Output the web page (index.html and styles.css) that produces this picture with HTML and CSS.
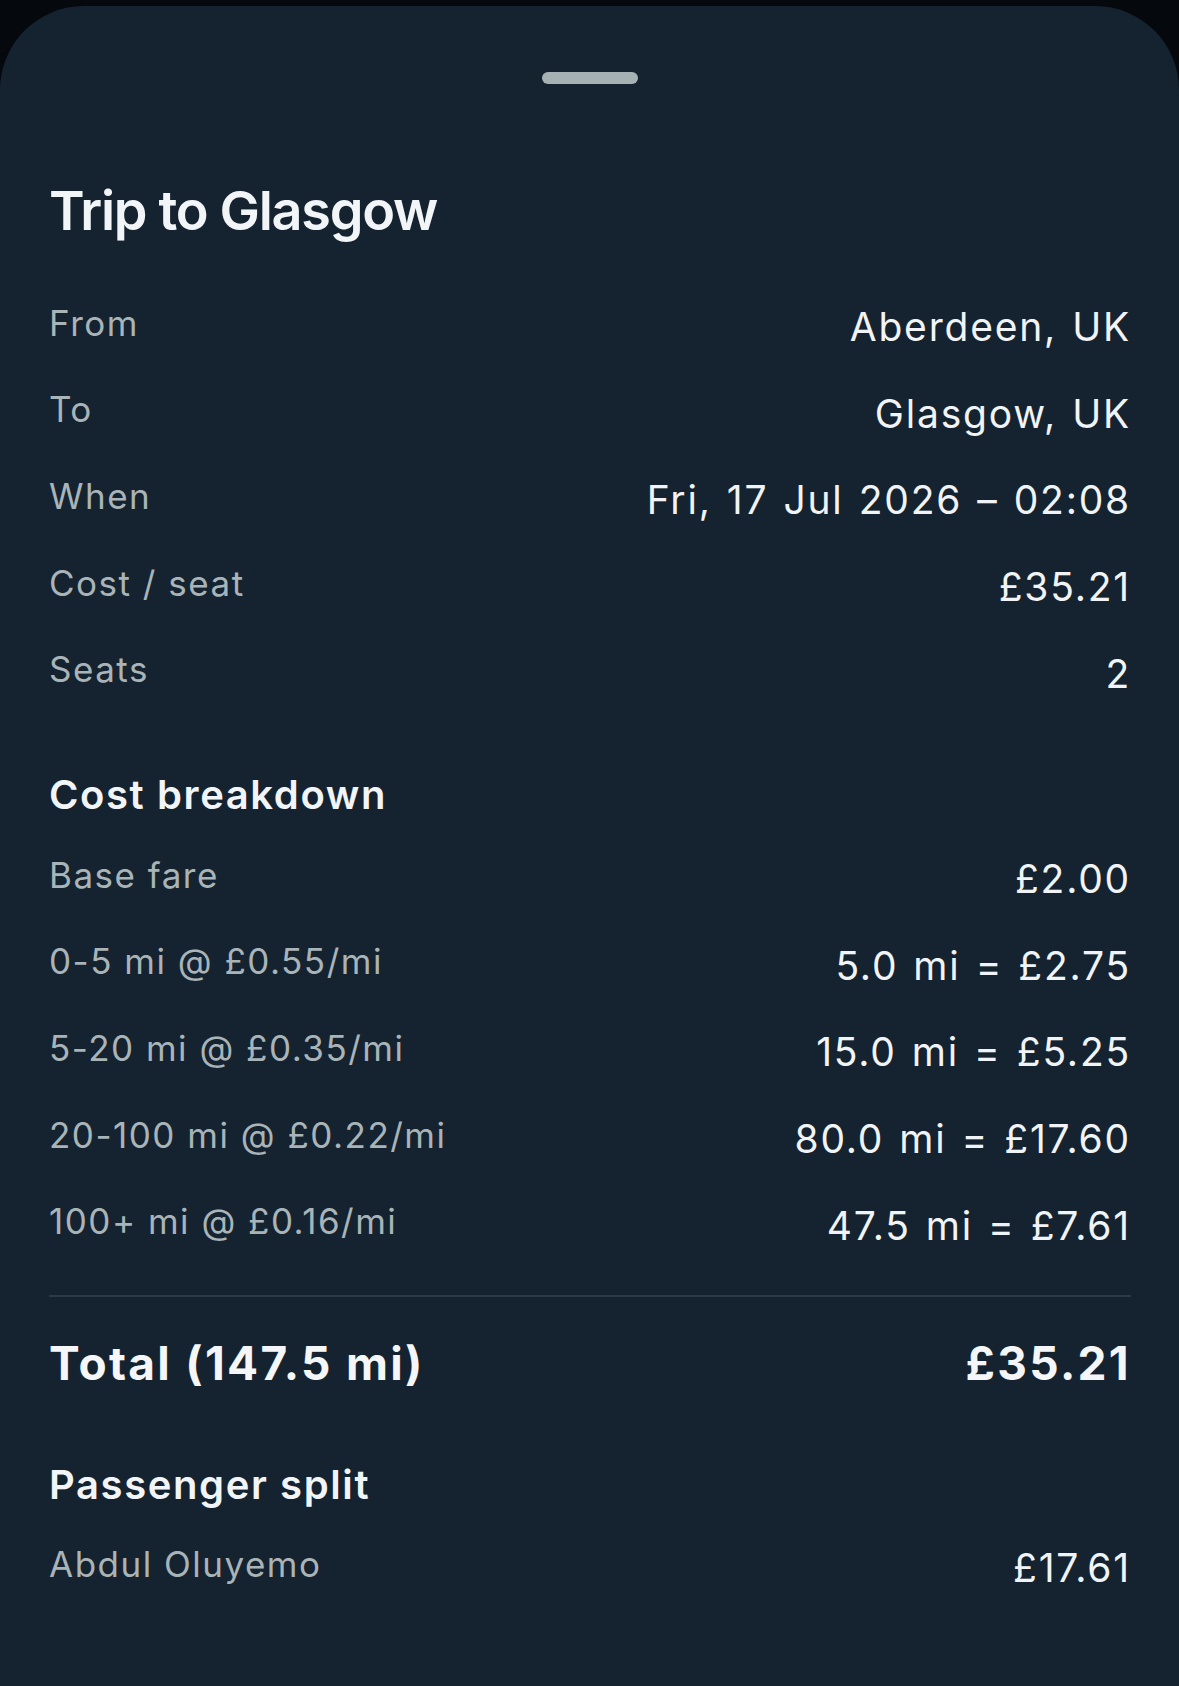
FILE: index.html
```html
<!DOCTYPE html>
<html lang="en">
<head>
    <meta charset="UTF-8">
    <meta name="viewport" content="width=device-width, initial-scale=1.0">
    <title>Trip to Glasgow</title>
    <link rel="stylesheet" href="styles.css">
</head>
<body>

    <div class="sheet">
        <div class="handle"></div>

        <h1 class="title">Trip to Glasgow</h1>

        <div class="rows trip-rows">
            <div class="row"><span class="label">From</span><span class="value">Aberdeen, UK</span></div>
            <div class="row"><span class="label">To</span><span class="value">Glasgow, UK</span></div>
            <div class="row"><span class="label">When</span><span class="value">Fri, 17 Jul 2026 – 02:08</span></div>
            <div class="row"><span class="label">Cost / seat</span><span class="value">£35.21</span></div>
            <div class="row"><span class="label">Seats</span><span class="value">2</span></div>
        </div>

        <h2 class="section-title breakdown-title">Cost breakdown</h2>

        <div class="rows">
            <div class="row"><span class="label">Base fare</span><span class="value">£2.00</span></div>
            <div class="row"><span class="label">0-5 mi @ £0.55/mi</span><span class="value">5.0 mi = £2.75</span></div>
            <div class="row"><span class="label">5-20 mi @ £0.35/mi</span><span class="value">15.0 mi = £5.25</span></div>
            <div class="row"><span class="label">20-100 mi @ £0.22/mi</span><span class="value">80.0 mi = £17.60</span></div>
            <div class="row"><span class="label">100+ mi @ £0.16/mi</span><span class="value">47.5 mi = £7.61</span></div>
        </div>

        <hr class="divider">

        <div class="total">
            <span>Total (147.5 mi)</span>
            <span>£35.21</span>
        </div>

        <h2 class="section-title split-title">Passenger split</h2>

        <div class="rows">
            <div class="row"><span class="label">Abdul Oluyemo</span><span class="value">£17.61</span></div>
        </div>
    </div>

</body>
</html>
```

FILE: styles.css
```css
body {
    margin: 0;
    padding: 0;
    background: #05090d;
    font-family: Inter, "Noto Sans", sans-serif;
    color: #f1f4f6;
}
.sheet {
    margin-top: 6px;
    min-height: 1680px;
    padding: 0 48px 0 49px;
    background-color: #152330;
    border-radius: 84px 84px 0 0;
    box-sizing: border-box;
    overflow: hidden;
}
.handle {
    width: 96px;
    height: 12px;
    margin: 66px auto 0;
    border-radius: 6px;
    background-color: #a6b1b3;
}
.title {
    margin: 95px 0 0;
    font-size: 54px;
    line-height: 64px;
    font-weight: 600;
    letter-spacing: -1.3px;
    color: #f2f5f7;
}
.trip-rows {
    margin-top: 41px;
}
.row {
    display: flex;
    justify-content: space-between;
    align-items: center;
    height: 86.6px;
}
.label {
    margin-bottom: 9px;
    font-size: 35px;
    line-height: 42px;
    letter-spacing: 1.5px;
    color: #a9b4b8;
}
.value {
    font-size: 39px;
    line-height: 48px;
    letter-spacing: 1.8px;
    word-spacing: 2.3px;
    color: #f1f4f6;
}
.section-title {
    margin: 0;
    font-size: 40px;
    line-height: 48px;
    font-weight: 600;
    letter-spacing: 1.6px;
    color: #f2f5f7;
}
.breakdown-title {
    margin: 54px 0 17px;
}
.split-title {
    margin: 70px 0 16px;
}
.divider {
    margin: 26px 0 0;
    height: 2px;
    border: none;
    background-color: #2c3a47;
}
.total {
    display: flex;
    justify-content: space-between;
    margin-top: 38px;
    font-size: 46px;
    line-height: 56px;
    font-weight: 700;
    letter-spacing: 2.3px;
    color: #f4f6f8;
}
```
